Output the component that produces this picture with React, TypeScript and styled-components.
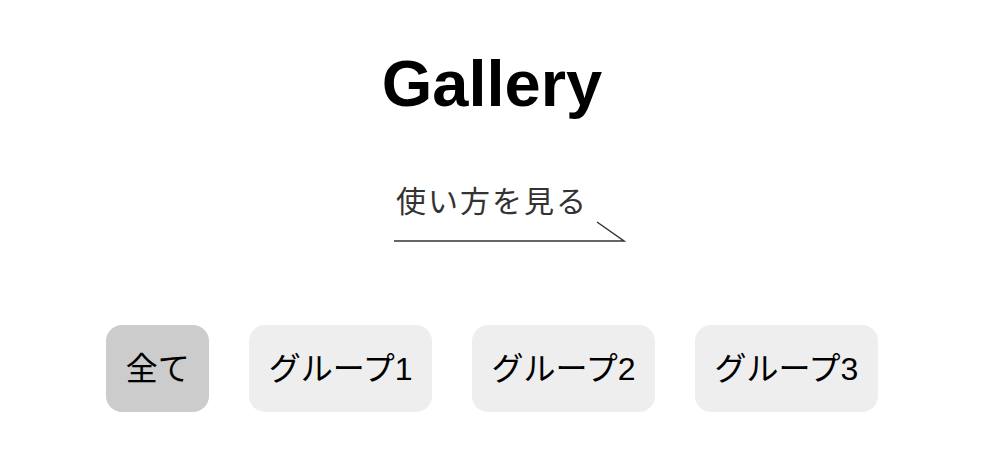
import React, { useState } from 'react'
import styled, { createGlobalStyle } from 'styled-components'

const GlobalStyle = createGlobalStyle`
  html, body {
    margin: 0;
    padding: 0;
    background: #fff;
  }
  body {
    font-family: "Liberation Sans", "Noto Sans CJK JP", sans-serif;
    color: #000;
  }
`

const groups = ['全て', 'グループ1', 'グループ2', 'グループ3']

const Page = styled.main`
  display: flex;
  flex-direction: column;
  align-items: center;
  padding-top: 51px;
`

const Title = styled.h1`
  margin: 0;
  font-size: 65px;
  line-height: 1;
  font-weight: 700;
`

const HowTo = styled.a`
  position: relative;
  display: inline-block;
  margin-top: 71px;
  padding-bottom: 25px;
  font-size: 30px;
  line-height: 1;
  letter-spacing: 2px;
  color: #333;
  text-decoration: none;
  cursor: pointer;
`

const Arrow = styled.svg`
  position: absolute;
  left: -2px;
  bottom: 0;
  overflow: visible;
`

const Tabs = styled.div`
  display: flex;
  gap: 40px;
  margin-top: 83px;
`

const Tab = styled.button<{ $active: boolean }>`
  height: 87px;
  padding: 0 19.5px;
  border: none;
  border-radius: 16px;
  background: ${p => (p.$active ? '#cccccc' : '#eeeeee')};
  font-family: inherit;
  font-size: 32px;
  line-height: 1;
  color: #000;
  cursor: pointer;
`

export default function App() {
  const [active, setActive] = useState(0)
  return (
    <>
      <GlobalStyle />
      <Page>
        <Title>Gallery</Title>
        <HowTo>
          使い方を見る
          <Arrow width="231" height="20" viewBox="0 0 231 20">
            <path d="M0 19 H230 L203 0" fill="none" stroke="#333" strokeWidth="1.5" />
          </Arrow>
        </HowTo>
        <Tabs>
          {groups.map((g, i) => (
            <Tab key={g} $active={i === active} onClick={() => setActive(i)}>
              {g}
            </Tab>
          ))}
        </Tabs>
      </Page>
    </>
  )
}
